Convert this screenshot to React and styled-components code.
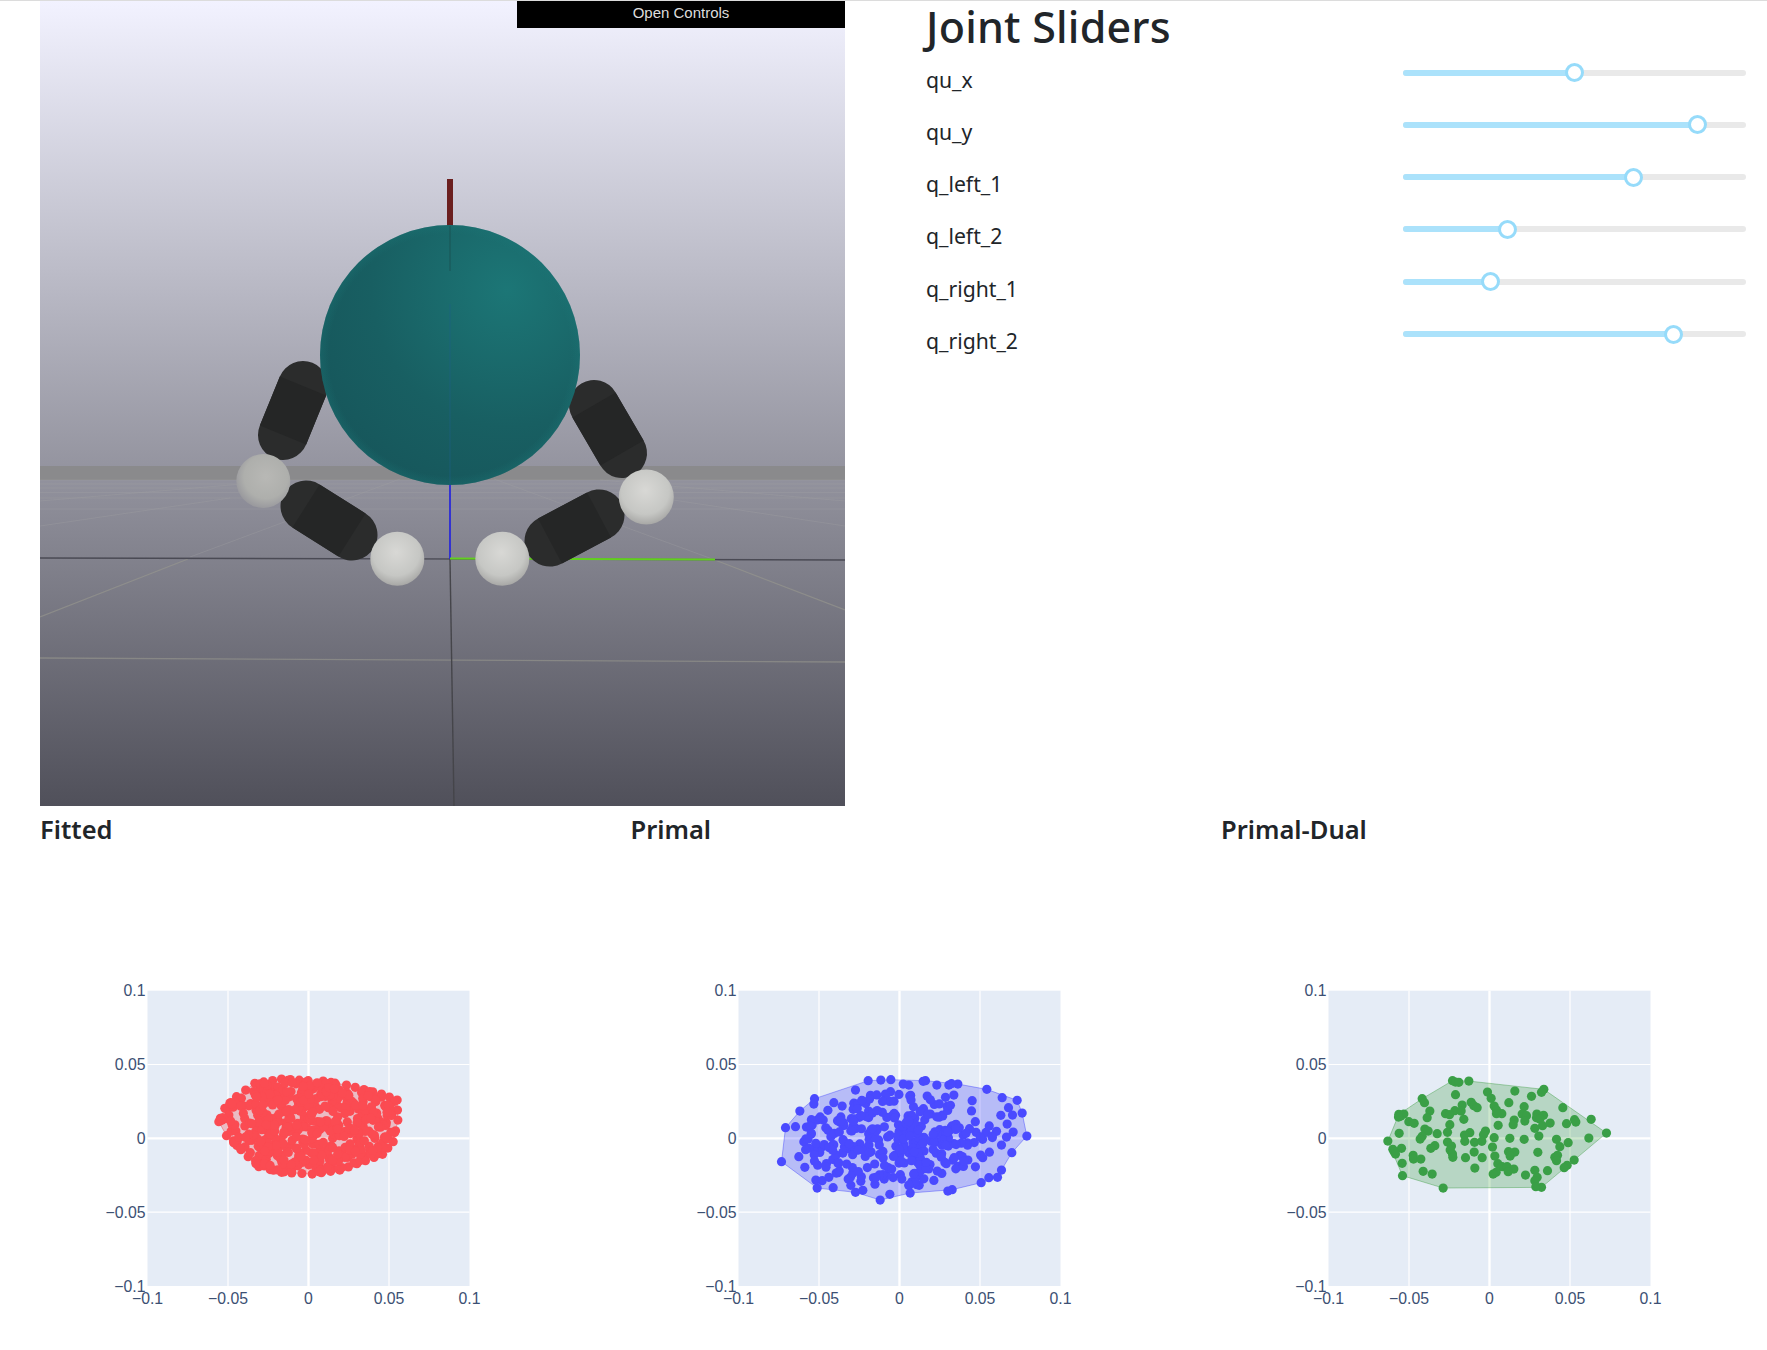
import React from "react";
import styled, { createGlobalStyle } from "styled-components";

const GlobalStyle = createGlobalStyle`
  html, body {
    margin: 0;
    padding: 0;
    background: #fff;
  }
`;

const Page = styled.div`
  border-top: 1px solid #dcdcdc;
  font-family: "Noto Sans", "Open Sans", sans-serif;
  color: #212529;
`;
const TopRow = styled.div`
  display: flex;
  padding-left: 40px;
`;
const SceneBox = styled.div`
  position: relative;
  width: 805px;
  height: 805px;
  flex: none;
  overflow: hidden;
  background: linear-gradient(#f2f2ff, #50505a);
`;
const SceneDrawing = styled.svg`
  display: block;
  width: 805px;
  height: 805px;
`;
const ControlsToggle = styled.div`
  position: absolute;
  top: 0;
  right: 0;
  width: 328px;
  height: 27px;
  background: #000;
  color: #ddd;
  font: 15px/24px "Liberation Sans", Arial, sans-serif;
  text-align: center;
`;
const Panel = styled.div`
  margin-left: 81px;
  width: 820px;
`;
const Heading = styled.h2`
  margin: 2px 0 15px;
  font-size: 43px;
  line-height: 48px;
  font-weight: 500;
  letter-spacing: 0.2px;
`;
const SliderRow = styled.div`
  display: flex;
  height: 52.33px;
`;
const SliderLabel = styled.div`
  width: 477px;
  margin-top: -1.5px;
  font-size: 21.2px;
  line-height: 30px;
`;
const SliderRail = styled.div`
  position: relative;
  width: 343px;
  height: 6px;
  margin-top: 3.5px;
  border-radius: 3px;
  background: #e9e9e9;
`;
const SliderFill = styled.div`
  height: 100%;
  border-radius: 3px;
  background: #abe2fb;
`;
const SliderThumb = styled.div`
  position: absolute;
  top: -6.5px;
  width: 19px;
  height: 19px;
  margin-left: -9.5px;
  box-sizing: border-box;
  border: 3px solid #96dbfa;
  border-radius: 50%;
  background: #fff;
`;
const ChartGrid = styled.div`
  display: grid;
  grid-template-columns: 590.5px 590.5px auto;
  padding: 9px 0 0 40px;
`;
const ChartCol = styled.div`
  display: flex;
  flex-direction: column;
`;
const ChartTitle = styled.h4`
  margin: 0 0 29px;
  font-size: 25.5px;
  line-height: 29px;
  font-weight: 600;
`;
const ChartSvg = styled.svg`
  display: block;
  width: 500px;
  height: 450px;
`;
const TickLabel = styled.text`
  font-family: "Liberation Sans", Arial, sans-serif;
  font-size: 15.8px;
  fill: #3c5073;
`;

const joints = [
  { name: "qu_x", value: 0.5 },
  { name: "qu_y", value: 0.86 },
  { name: "q_left_1", value: 0.673 },
  { name: "q_left_2", value: 0.306 },
  { name: "q_right_1", value: 0.254 },
  { name: "q_right_2", value: 0.79 },
];

// all plot points below are in pixels of a 3x crop of the plot
const redHull = [
  [525, 340], [605, 327], [685, 332], [730, 333], [800, 345], [905, 372], [952, 390], [954, 450],
  [940, 515], [908, 553], [780, 600], [697, 612], [605, 607], [537, 590], [505, 560], [440, 497],
  [417, 455], [435, 415], [470, 380],
];
const blueHull = [
  [593, 332], [661, 329], [765, 332], [862, 342], [949, 358], [1040, 391], [1055, 429], [1069, 498],
  [1024, 548], [993, 600], [981, 622], [932, 638], [845, 659], [719, 669], [629, 690], [555, 667],
  [440, 654], [333, 575], [345, 473], [388, 423], [432, 386],
];
const greenHull = [
  [578, 332], [627, 333], [852, 358], [1040, 489], [845, 652], [550, 654], [428, 617], [384, 513],
  [417, 433], [487, 386],
];
const blueOuter = [
  [631, 330], [698, 342], [715, 345], [758, 334], [799, 345], [835, 345], [843, 341], [995, 383],
  [1014, 413], [1026, 435], [991, 436], [1010, 462], [978, 484], [1028, 486], [1008, 501], [993, 525],
  [955, 623], [832, 663], [658, 673], [577, 661], [488, 653], [430, 402], [497, 609], [385, 560],
  [403, 592], [571, 634], [541, 646], [436, 630], [455, 632], [475, 622], [400, 515], [425, 465],
  [375, 470], [490, 398], [515, 408], [548, 418], [555, 360], [600, 376], [645, 372], [660, 365],
  [850, 375], [905, 392], [825, 382], [770, 378],
];
const greenPoints = [
  [587, 336], [597, 337], [845, 367], [765, 363], [815, 379], [683, 366], [587, 374], [694, 385],
  [494, 398], [909, 413], [747, 398], [793, 410], [634, 397], [642, 407], [652, 413], [607, 405],
  [703, 408], [710, 420], [726, 431], [710, 431], [510, 423], [585, 422], [604, 423], [557, 431],
  [569, 434], [432, 432], [423, 438], [416, 441], [502, 443], [612, 448], [787, 432], [800, 437],
  [795, 453], [763, 450], [760, 464], [831, 432], [830, 443], [851, 436], [840, 447], [848, 467],
  [871, 459], [825, 475], [447, 455], [463, 460], [570, 464], [715, 466], [920, 461], [944, 449],
  [948, 456], [994, 448], [495, 477], [505, 483], [563, 487], [532, 491], [630, 488], [614, 495],
  [677, 483], [671, 494], [418, 490], [487, 499], [481, 507], [837, 498], [703, 503], [750, 505],
  [793, 508], [890, 508], [987, 504], [900, 530], [925, 518], [563, 516], [615, 514], [644, 517],
  [666, 514], [575, 528], [525, 527], [513, 535], [425, 535], [399, 538], [403, 545], [407, 552],
  [571, 540], [578, 552], [579, 562], [698, 531], [643, 546], [746, 545], [765, 546], [753, 550],
  [751, 558], [834, 547], [705, 558], [667, 563], [617, 563], [460, 556], [461, 567], [483, 567],
  [893, 556], [885, 562], [890, 572], [943, 570], [922, 586], [913, 593], [427, 580], [714, 581],
  [727, 590], [742, 590], [762, 597], [745, 605], [709, 607], [700, 612], [645, 594], [490, 604],
  [517, 612], [825, 601], [863, 602], [797, 615], [832, 622], [825, 632], [828, 650],
];

const seeded = (seed) => () => {
  seed = (seed + 0x6d2b79f5) | 0;
  let t = Math.imul(seed ^ (seed >>> 15), 1 | seed);
  t = (t + Math.imul(t ^ (t >>> 7), 61 | t)) ^ t;
  return ((t ^ (t >>> 14)) >>> 0) / 4294967296;
};

const inside = (hull, x, y) => {
  let hit = false;
  for (let i = 0, j = hull.length - 1; i < hull.length; j = i++) {
    const [xi, yi] = hull[i];
    const [xj, yj] = hull[j];
    if (yi > y !== yj > y && x < ((xj - xi) * (y - yi)) / (yj - yi) + xi) hit = !hit;
  }
  return hit;
};

const scatter = (hull, count, seed, accept) => {
  const rand = seeded(seed);
  const out = [];
  while (out.length < count) {
    const x = 300 + rand() * 800;
    const y = 300 + rand() * 420;
    if (inside(hull, x, y) && accept(x, y, rand)) out.push([x, y]);
  }
  return out;
};

const alongEdges = (hull, step) => {
  const out = [];
  hull.forEach(([x, y], i) => {
    const [nx, ny] = hull[(i + 1) % hull.length];
    const n = Math.floor(Math.hypot(nx - x, ny - y) / step);
    for (let k = 1; k < n; k++) out.push([x + ((nx - x) * k) / n, y + ((ny - y) * k) / n]);
  });
  return out;
};

const redPoints = [
  ...alongEdges(redHull, 24),
  ...scatter(redHull, 470, 11, () => true),
];
const bluePoints = [
  ...blueOuter,
  ...scatter(blueHull, 300, 7, (x, y, rand) => {
    const d = Math.hypot((x - 680) / 290, (y - 510) / 140);
    return d < 1 && rand() < 1.15 - d * 0.7;
  }),
];

const PLOT_W = 322;
const PLOT_H = 295.3;
const PLOT_X = 107.5;
const PLOT_Y = 117.7;
const TICKS = [
  { at: 0, label: "\u22120.1" },
  { at: 0.25, label: "\u22120.05" },
  { at: 0.5, label: "0" },
  { at: 0.75, label: "0.05" },
  { at: 1, label: "0.1" },
];

const ScatterChart = ({ title, color, marker, hull, points, cropLeft }) => {
  const px = (x) => (x - cropLeft) / 3;
  const py = (y) => (y - 62) / 3;
  return (
    <ChartCol>
      <ChartTitle>{title}</ChartTitle>
      <ChartSvg viewBox="0 0 500 450">
        <g transform={`translate(${PLOT_X} ${PLOT_Y})`}>
          <rect width={PLOT_W} height={PLOT_H} fill="#e5ecf6" />
          {[0.25, 0.75].map((t) => (
            <g key={t} stroke="#fff" strokeWidth="1.2">
              <line x1={t * PLOT_W} x2={t * PLOT_W} y2={PLOT_H} />
              <line y1={t * PLOT_H} y2={t * PLOT_H} x2={PLOT_W} />
            </g>
          ))}
          <g stroke="#fff" strokeWidth="2.4">
            <line x1={PLOT_W / 2} x2={PLOT_W / 2} y2={PLOT_H} />
            <line y1={PLOT_H / 2} y2={PLOT_H / 2} x2={PLOT_W} />
          </g>
          <polygon
            points={hull.map(([x, y]) => `${px(x)},${py(y)}`).join(" ")}
            fill={color}
            fillOpacity="0.2"
            stroke={color}
            strokeOpacity="0.3"
            strokeWidth="1"
          />
          <g fill={marker}>
            {[...hull, ...points].map(([x, y], i) => (
              <circle key={i} cx={px(x)} cy={py(y)} r="4.6" />
            ))}
          </g>
          {TICKS.map((t) => (
            <TickLabel key={t.at} x={t.at * PLOT_W} y={PLOT_H + 12.9 + 5.6} textAnchor="middle">
              {t.label}
            </TickLabel>
          ))}
          {TICKS.map((t) => (
            <TickLabel key={t.at} x={-2} y={(1 - t.at) * PLOT_H + 5.6} textAnchor="end">
              {t.label}
            </TickLabel>
          ))}
        </g>
      </ChartSvg>
    </ChartCol>
  );
};

const Capsule = ({ a, b, width = 50 }) => (
  <g>
    <line x1={a[0]} y1={a[1]} x2={b[0]} y2={b[1]} stroke="#2b2c2c" strokeWidth={width} strokeLinecap="round" />
    <line x1={a[0]} y1={a[1]} x2={b[0]} y2={b[1]} stroke="#252626" strokeWidth={width} />
  </g>
);

const Ball = ({ x, y, r, dim }) => (
  <circle cx={x} cy={y} r={r} fill={dim ? "url(#ballDim)" : "url(#ball)"} />
);

const RobotScene = () => (
  <SceneDrawing viewBox="0 0 805 805">
    <defs>
      <radialGradient id="teal" cx="0.72" cy="0.25" r="0.95">
        <stop offset="0" stopColor="#1c7676" />
        <stop offset="0.55" stopColor="#185f62" />
        <stop offset="1" stopColor="#165459" />
      </radialGradient>
      <radialGradient id="tealRim" cx="0.5" cy="0.5" r="0.5">
        <stop offset="0.93" stopColor="#1c7878" stopOpacity="0" />
        <stop offset="1" stopColor="#1c7878" stopOpacity="0.3" />
      </radialGradient>
      <radialGradient id="ball" cx="0.48" cy="0.38" r="0.62">
        <stop offset="0" stopColor="#d8d8d5" />
        <stop offset="0.7" stopColor="#c6c7c4" />
        <stop offset="1" stopColor="#a8a8a6" />
      </radialGradient>
      <radialGradient id="ballDim" cx="0.55" cy="0.42" r="0.58">
        <stop offset="0" stopColor="#b8b8b5" />
        <stop offset="0.7" stopColor="#aeafac" />
        <stop offset="1" stopColor="#9a9a9e" />
      </radialGradient>
    </defs>

    {/* floor */}
    <rect y="465" width="805" height="14" fill="#8a8a8c" />
    <g stroke="#a0a0a2" strokeOpacity="0.35" strokeWidth="1" fill="none">
      <path d="M0 479H805M0 483H805M0 487H805M0 491.5H805M0 497H805M0 508H805" />
      <path d="M0 525L190 497M805 525L620 497M360 478L150 556M454 478L675 559" />
      <path d="M0 500L250 479M805 500L560 479" />
    </g>
    <g fill="none" stroke="#9a9a90" strokeOpacity="0.6" strokeWidth="1.3">
      <path d="M0 616L148 558M805 609L675 559" />
      <path d="M0 657L805 661" />
    </g>
    <path d="M0 557L805 559" stroke="#4a4a54" strokeWidth="1.4" />
    <path d="M410 558L414 805" stroke="#45454a" strokeWidth="1.4" fill="none" />

    {/* axes */}
    <rect x="407" y="178" width="6" height="50" fill="#6b1f1f" />
    <path d="M410 484V558" stroke="#2a2ad8" strokeWidth="1.8" />
    <path d="M410 557.5L675 558.5" stroke="#62d01e" strokeWidth="2" />

    <Capsule a={[263, 385]} b={[243, 434]} />
    <Capsule a={[554, 404]} b={[582, 452]} />
    <Capsule a={[266, 505]} b={[312, 534]} width={51} />
    <Capsule a={[559, 514]} b={[510, 540]} width={51} />

    <circle cx="410" cy="354" r="130" fill="url(#teal)" />
    <circle cx="410" cy="354" r="130" fill="url(#tealRim)" />
    <rect x="409" y="225" width="2" height="45" fill="#1a4a4a" fillOpacity="0.35" />
    <path d="M410 303V484" stroke="#1f6088" strokeOpacity="0.55" strokeWidth="1" />

    <Ball x={223.3} y={480} r={27} dim />
    <Ball x={357.3} y={557.7} r={27} />
    <Ball x={462.3} y={557.7} r={27} />
    <Ball x={606.3} y={496} r={27.5} />
  </SceneDrawing>
);

const JointSlider = ({ name, value }) => (
  <SliderRow>
    <SliderLabel>{name}</SliderLabel>
    <SliderRail>
      <SliderFill style={{ width: `${value * 100}%` }} />
      <SliderThumb style={{ left: `${value * 100}%` }} />
    </SliderRail>
  </SliderRow>
);

const App = () => (
  <Page>
    <GlobalStyle />
    <TopRow>
      <SceneBox>
        <RobotScene />
        <ControlsToggle>Open Controls</ControlsToggle>
      </SceneBox>
      <Panel>
        <Heading>Joint Sliders</Heading>
        {joints.map((j) => (
          <JointSlider key={j.name} {...j} />
        ))}
      </Panel>
    </TopRow>
    <ChartGrid>
      <ScatterChart title="Fitted" color="#ff0000" marker="#fb4b52" hull={redHull} points={redPoints} cropLeft={203} />
      <ScatterChart title="Primal" color="#0000ff" marker="#4a4aff" hull={blueHull} points={bluePoints} cropLeft={204} />
      <ScatterChart title="Primal-Dual" color="#008000" marker="#3a9f46" hull={greenHull} points={greenPoints} cropLeft={206} />
    </ChartGrid>
  </Page>
);

export default App;
